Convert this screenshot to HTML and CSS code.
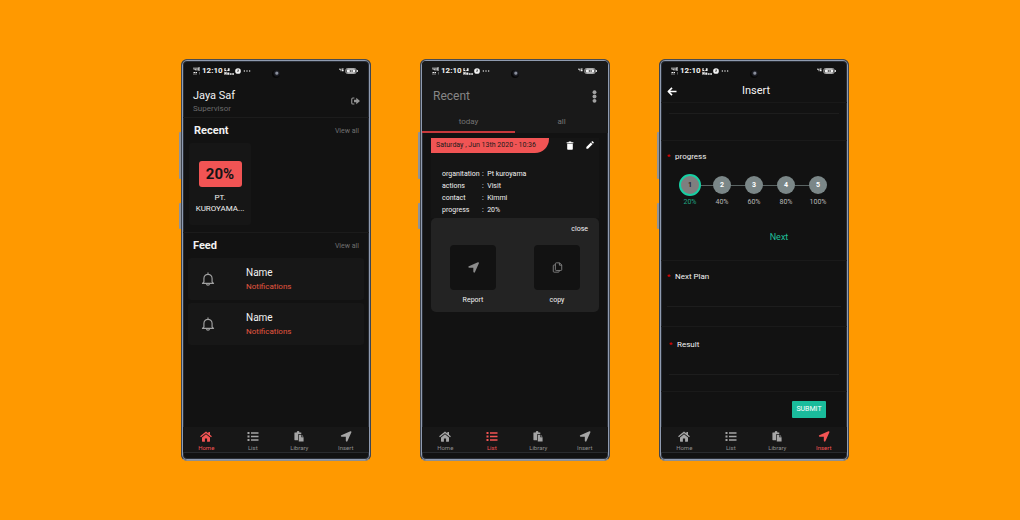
FILE: index.html
```html
<!DOCTYPE html>
<html lang="en">
<head>
<meta charset="utf-8">
<meta name="viewport" content="width=device-width, initial-scale=1">
<title>Sales report app</title>
<link rel="stylesheet" href="styles.css">
</head>
<body>
<svg class="sprite" aria-hidden="true">
  <symbol id="home" viewBox="0 0 24 22"><path d="M12 6.500 4 13v7.500c0 .600.400 1 1 1h4.800V15h4.400v6.500H19c.600 0 1-.400 1-1V13z"/><path d="M23.800 10.500 20 7.400V2h-3.300v2.700L13.300 1.800a2 2 0 0 0-2.600 0L.200 10.500l1.700 2.200L12 4.400l10.100 8.300z"/></symbol>
  <symbol id="list" viewBox="0 0 24 22"><path d="M1 2h4v4H1zM1 9h4v4H1zM1 16h4v4H1zM8 2.500h15v3H8zM8 9.500h15v3H8zM8 16.500h15v3H8z"/></symbol>
  <symbol id="library" viewBox="0 0 24 24"><path d="M3 3h4a3 3 0 0 1 6 0h4v4h-7v13H3a1 1 0 0 1-1-1V4a1 1 0 0 1 1-1zM11.500 8.500H17v5h5V23H11.500z"/><path d="M18.300 8.500 22 12.200h-3.700z"/></symbol>
  <symbol id="arrow" viewBox="0 0 24 24"><path d="M23.800 2.500 15 22.300c-.800 1.700-3.400 1-3.400-.800v-8.900H2.500c-1.900 0-2.400-2.600-.700-3.400L21.600.400c1.400-.500 2.700.700 2.200 2.100z"/></symbol>
  <symbol id="bell" viewBox="0 0 24 24"><path class="line" d="M12 1v2.500M5 17V11a7 7 0 0 1 14 0v6l2.500 2.500h-19zM9.500 20a2.500 2.500 0 0 0 5 0"/></symbol>
  <symbol id="exit" viewBox="0 0 24 20"><path class="line thick" d="M9 2H5a3 3 0 0 0-3 3v10a3 3 0 0 0 3 3h4"/><path d="M8 6.500h6V1.500L24 10l-10 8.500v-5H8z"/></symbol>
  <symbol id="dots" viewBox="0 0 8 24"><circle cx="4" cy="4" r="3.600"/><circle cx="4" cy="12" r="3.600"/><circle cx="4" cy="20" r="3.600"/></symbol>
  <symbol id="trash" viewBox="0 0 20 24"><path d="M1 3h5l1-2h6l1 2h5v3H1zM2.500 7.500h15V21a2 2 0 0 1-2 2h-11a2 2 0 0 1-2-2z"/></symbol>
  <symbol id="pencil" viewBox="0 0 24 24"><path d="M1 18 14.500 4.500l5 5L6 23H1zM16 3l2-2q1-1 2 0l3 3q1 1 0 2l-2 2z"/></symbol>
  <symbol id="copy" viewBox="0 0 24 26"><path class="line" d="M9 2h8l5 5v11a2 2 0 0 1-2 2H9a2 2 0 0 1-2-2V4a2 2 0 0 1 2-2zM16.500 2v5.500H22M7 7H4a2 2 0 0 0-2 2v13a2 2 0 0 0 2 2h10a2 2 0 0 0 2-2v-2"/></symbol>
  <symbol id="back" viewBox="0 0 24 22"><path class="line heavy" d="M12 2 3 11l9 9M3 11h20"/></symbol>
  <symbol id="signal" viewBox="0 0 16 16"><path d="M1 1h2v3h2V1h2v6H5V5H1zM9 1h5v2h-3v2h3v2H9zM1 10h3v2H1zM5 10h3v2H5zM1 13h2v2H1zM5 13h2v2H5z"/><path opacity=".3" d="M12 10h2v5h-2z"/></symbol>
  <symbol id="rate" viewBox="0 0 34 24"><path d="M1 1h5v4H4v2h3v3H1zM9 7h3v3H9zM13 1h6v9h-6zM1 13h3l2 4v-4h3v10H6l-2-4v4H1zM11 15h7v8h-7zM20 18h6v5h-6zM28 18h6v5h-6z"/></symbol>
  <symbol id="clock" viewBox="0 0 20 20"><circle cx="10" cy="10" r="9.500"/><path class="dark" d="M9 11V5h3v6zM7 10h5v2H7z"/></symbol>
  <symbol id="more" viewBox="0 0 22 6"><circle cx="3" cy="3" r="2"/><circle cx="11" cy="3" r="2"/><circle cx="19" cy="3" r="2"/></symbol>
  <symbol id="network" viewBox="0 0 16 20"><path d="M1 2h2v3h2V2h2v9H5V7H1zM9 2h6v3h-4v2h4v4H9z"/></symbol>
  <symbol id="battery" viewBox="0 0 38 18"><rect class="line" x="2" y="1.500" width="31" height="15" rx="5"/><path d="M35 6h3v6h-3z"/><rect x="5" y="4" width="25" height="10" rx="3"/><path class="dark" d="M14 6h2v2h4V6h2v6h-2v-2h-4v2h-2z"/></symbol>
</svg>

<main class="stage">

  <section class="phone" aria-label="Home screen">
    <div class="status">
      <svg class="s-signal"><use href="#signal"/></svg><span class="time">12:10</span><svg class="s-rate"><use href="#rate"/></svg><svg class="s-clock"><use href="#clock"/></svg><svg class="s-more"><use href="#more"/></svg>
      <span class="camera"></span>
      <svg class="s-network"><use href="#network"/></svg><svg class="s-battery"><use href="#battery"/></svg>
    </div>
    <header class="profile">
      <div>
        <h1 class="user">Jaya Saf</h1>
        <p class="role">Supervisor</p>
      </div>
      <button class="icon-button" aria-label="Log out"><svg class="i-exit"><use href="#exit"/></svg></button>
    </header>
    <section class="recent">
      <div class="section-head"><h2 class="section-title">Recent</h2><a class="view-all" href="#recent">View all</a></div>
      <article class="visit">
        <strong class="percent">20%</strong>
        <p class="company">PT.<br>KUROYAMA...</p>
      </article>
    </section>
    <section class="feed">
      <div class="section-head"><h2 class="section-title">Feed</h2><a class="view-all" href="#feed">View all</a></div>
      <article class="notice"><svg class="i-bell"><use href="#bell"/></svg><div><h3 class="notice-name">Name</h3><p class="notice-text">Notifications</p></div></article>
      <article class="notice"><svg class="i-bell"><use href="#bell"/></svg><div><h3 class="notice-name">Name</h3><p class="notice-text">Notifications</p></div></article>
    </section>
    <nav class="tabbar">
      <a class="tab active" href="#home-tab"><svg class="i-tab"><use href="#home"/></svg>Home</a>
      <a class="tab" href="#list-tab"><svg class="i-tab"><use href="#list"/></svg>List</a>
      <a class="tab" href="#library-tab"><svg class="i-tab"><use href="#library"/></svg>Library</a>
      <a class="tab" href="#insert-tab"><svg class="i-tab"><use href="#arrow"/></svg>Insert</a>
    </nav>
  </section>

  <section class="phone" aria-label="List screen">
    <div class="status raised">
      <svg class="s-signal"><use href="#signal"/></svg><span class="time">12:10</span><svg class="s-rate"><use href="#rate"/></svg><svg class="s-clock"><use href="#clock"/></svg><svg class="s-more"><use href="#more"/></svg>
      <span class="camera"></span>
      <svg class="s-network"><use href="#network"/></svg><svg class="s-battery"><use href="#battery"/></svg>
    </div>
    <header class="list-head raised">
      <h1 class="list-title">Recent</h1>
      <button class="icon-button" aria-label="More options"><svg class="i-dots"><use href="#dots"/></svg></button>
    </header>
    <div class="filters raised">
      <button class="filter selected">today</button>
      <button class="filter">all</button>
    </div>
    <article class="entry">
      <div class="entry-head">
        <h2 class="entry-date">Saturday , Jun 13th 2020 - 10:36</h2>
        <div class="entry-tools">
          <button class="icon-button" aria-label="Delete"><svg class="i-trash"><use href="#trash"/></svg></button>
          <button class="icon-button" aria-label="Edit"><svg class="i-pencil"><use href="#pencil"/></svg></button>
        </div>
      </div>
      <dl class="details">
        <dt>organitation</dt><dd>:&nbsp; Pt kuroyama</dd>
        <dt>actions</dt><dd>:&nbsp; Visit</dd>
        <dt>contact</dt><dd>:&nbsp; Kimmi</dd>
        <dt>progress</dt><dd>:&nbsp; 20%</dd>
      </dl>
    </article>
    <div class="sheet">
      <button class="close">close</button>
      <div class="choices">
        <button class="choice"><span class="tile"><svg class="i-tile"><use href="#arrow"/></svg></span>Report</button>
        <button class="choice"><span class="tile"><svg class="i-tile"><use href="#copy"/></svg></span>copy</button>
      </div>
    </div>
    <nav class="tabbar">
      <a class="tab" href="#home-tab"><svg class="i-tab"><use href="#home"/></svg>Home</a>
      <a class="tab active" href="#list-tab"><svg class="i-tab"><use href="#list"/></svg>List</a>
      <a class="tab" href="#library-tab"><svg class="i-tab"><use href="#library"/></svg>Library</a>
      <a class="tab" href="#insert-tab"><svg class="i-tab"><use href="#arrow"/></svg>Insert</a>
    </nav>
  </section>

  <section class="phone" aria-label="Insert screen">
    <div class="status">
      <svg class="s-signal"><use href="#signal"/></svg><span class="time">12:10</span><svg class="s-rate"><use href="#rate"/></svg><svg class="s-clock"><use href="#clock"/></svg><svg class="s-more"><use href="#more"/></svg>
      <span class="camera"></span>
      <svg class="s-network"><use href="#network"/></svg><svg class="s-battery"><use href="#battery"/></svg>
    </div>
    <header class="insert-head">
      <button class="icon-button" aria-label="Back"><svg class="i-back"><use href="#back"/></svg></button>
      <h1 class="insert-title">Insert</h1>
    </header>
    <form class="form">
      <div class="field scrolled"><input class="entry-line" type="text" aria-label="Previous field"></div>
      <div class="field progress">
        <h2 class="label"><span class="required">*</span>progress</h2>
        <ol class="steps">
          <li class="step current"><span class="dot">1</span>20%</li>
          <li class="step"><span class="dot">2</span>40%</li>
          <li class="step"><span class="dot">3</span>60%</li>
          <li class="step"><span class="dot">4</span>80%</li>
          <li class="step"><span class="dot">5</span>100%</li>
        </ol>
        <button class="next" type="button">Next</button>
      </div>
      <div class="field">
        <label class="label" for="plan"><span class="required">*</span>Next Plan</label>
        <input class="entry-line" id="plan" type="text">
      </div>
      <div class="field inset">
        <label class="label" for="result"><span class="required">*</span>Result</label>
        <input class="entry-line" id="result" type="text">
      </div>
      <button class="submit" type="submit">SUBMIT</button>
    </form>
    <nav class="tabbar">
      <a class="tab" href="#home-tab"><svg class="i-tab"><use href="#home"/></svg>Home</a>
      <a class="tab" href="#list-tab"><svg class="i-tab"><use href="#list"/></svg>List</a>
      <a class="tab" href="#library-tab"><svg class="i-tab"><use href="#library"/></svg>Library</a>
      <a class="tab active" href="#insert-tab"><svg class="i-tab"><use href="#arrow"/></svg>Insert</a>
    </nav>
  </section>

</main>
</body>
</html>
```

FILE: styles.css
```css
* { box-sizing: border-box; }

body {
  margin: 0;
  min-height: 100vh;
  background: #ff9900;
  color: #f2f2f2;
  font-family: Roboto, "Liberation Sans", sans-serif;
  font-size: 8px;
  line-height: 12px;
}

h1, h2, h3, p, dl, dd, ol { margin: 0; padding: 0; font-size: inherit; font-weight: 400; }
button, input { font: inherit; color: inherit; background: none; border: 0; margin: 0; padding: 0; }
a { color: inherit; text-decoration: none; }
svg { display: block; flex: none; fill: currentColor; }
.sprite { position: absolute; width: 0; height: 0; }
.line { fill: none; stroke: currentColor; stroke-width: 2; stroke-linejoin: round; }
.thick { stroke-width: 3; }
.heavy { stroke-width: 4; }
.dark { fill: #121212; }

.stage {
  display: grid;
  grid-template-columns: repeat(auto-fit, 190px);
  justify-content: center;
  gap: 49px;
  padding: 59px 140px 59px 150px;
}

/* Phone body */
.phone {
  position: relative;
  display: flex;
  flex-direction: column;
  min-height: 402px;
  padding: 1px;
  background: #121212;
  border: 1px solid;
  border-color: #4a4c50 #3f4550 #8d8f93;
  border-radius: 6px;
  box-shadow: inset 0 0 0 1px #8f9bb0, inset 0 0 0 2px #2a2e36;
}
.phone::before,
.phone::after {
  content: "";
  position: absolute;
  left: -3px;
  width: 2px;
  background: #8f949c;
  border-radius: 1px 0 0 1px;
}
.phone::before { top: 72px; height: 47px; }
.phone::after { top: 143px; height: 26px; }
.raised { background: #191919; }

.status {
  position: relative;
  display: flex;
  align-items: center;
  gap: 1px;
  height: 19px;
  padding: 1px 11px 0 10px;
  border-radius: 4px 4px 0 0;
}
.time { font-size: 8px; font-weight: 700; }
.s-signal { width: 8px; height: 8px; }
.s-rate { width: 10px; height: 7px; }
.s-clock { width: 6px; height: 6px; margin-right: 1px; }
.s-more { width: 8px; height: 2px; }
.s-network { width: 5px; height: 6px; margin-left: auto; }
.s-battery { width: 13px; height: 6px; }
.camera {
  position: absolute;
  left: 50%;
  top: 9px;
  width: 8px;
  height: 8px;
  margin-left: -4px;
  border-radius: 50%;
  background: radial-gradient(circle at 60% 40%, #8a8f9c 0 1px, #20222a 2px, #060606 4px);
}

.icon-button { display: flex; }

/* Home */
.profile {
  display: flex;
  align-items: center;
  justify-content: space-between;
  padding: 9px 9px 2px 10px;
  border-bottom: 1px solid #1c1c1c;
}
.user { font-size: 11px; line-height: 14px; }
.role { color: #6b6b6b; line-height: 12px; }
.i-exit { width: 9px; height: 8px; color: #969696; }
.profile .icon-button { padding-bottom: 2px; }
.section-head {
  display: flex;
  align-items: center;
  justify-content: space-between;
  padding: 6px 5px 5px;
}
.section-title { font-size: 11px; line-height: 14px; font-weight: 700; }
.view-all { color: #707070; font-size: 7px; }
.recent { padding: 0 5px 7px 6px; border-bottom: 1px solid #1b1b1b; }
.visit {
  display: flex;
  flex-direction: column;
  align-items: center;
  width: 62px;
  padding: 18px 4px 11px;
  background: #161616;
  border-radius: 3px;
}
.percent {
  width: 43px;
  border-radius: 3px;
  background: #f15454;
  color: #141414;
  font-size: 15px;
  line-height: 26px;
  text-align: center;
}
.company { margin-top: 5px; line-height: 11px; text-align: center; white-space: nowrap; }
.feed { padding: 0 5px; }
.notice {
  display: grid;
  grid-template-columns: 58px 1fr;
  align-items: center;
  min-height: 42px;
  margin-bottom: 3px;
  background: #171717;
  border-radius: 3px;
}
.i-bell { width: 14px; height: 14px; margin-left: 13px; color: #a0a0a0; }
.notice-name { font-size: 10px; line-height: 14px; }
.notice-text { line-height: 13px; color: #e3563f; }

/* List */
.list-head {
  display: flex;
  align-items: center;
  justify-content: space-between;
  height: 32px;
  padding: 0 11px;
}
.list-title { font-size: 12px; line-height: 16px; color: #868686; }
.i-dots { width: 5px; height: 13px; color: #a2a2a2; }
.filters { display: flex; color: #747474; }
.filter { flex: 1; height: 21px; border-bottom: 2px solid transparent; }
.selected { border-color: #c7393c; }
.entry { margin: 5px 9px 0; padding-bottom: 2px; background: #151515; }
.entry-head { display: flex; align-items: center; justify-content: space-between; }
.entry-date {
  padding: 0 13px 0 5px;
  background: #f15454;
  color: #1b1b1b;
  border-bottom-right-radius: 14px;
  font-size: 7px;
  line-height: 15px;
}
.entry-tools { display: flex; gap: 12px; padding-right: 5px; }
.i-trash { width: 8px; height: 9px; color: #fff; }
.i-pencil { width: 8px; height: 8px; color: #fff; }
.details {
  display: grid;
  grid-template-columns: 40px 1fr;
  padding: 15px 0 0 11px;
  font-size: 7px;
  line-height: 12px;
}
.sheet {
  display: flex;
  flex-direction: column;
  margin: 0 9px;
  padding: 5px 11px 6px;
  background: #232323;
  border-radius: 5px;
  font-size: 7px;
}
.close { align-self: flex-end; line-height: 12px; }
.choices { display: flex; justify-content: space-around; padding-top: 10px; margin: 0 -11px; }
.choice { display: flex; flex-direction: column; align-items: center; gap: 4px; line-height: 12px; }
.tile {
  display: grid;
  place-items: center;
  width: 46px;
  height: 45px;
  background: #121212;
  border-radius: 4px;
  color: #8c8c8c;
}
.i-tile { width: 11px; height: 11px; }

/* Insert */
.insert-head {
  display: grid;
  grid-template-columns: 12px 1fr 8px;
  align-items: center;
  height: 23px;
  padding: 0 6px;
  border-bottom: 1px solid #191919;
}
.i-back { width: 10px; height: 9px; color: #fff; }
.insert-title { font-size: 11px; text-align: center; }
.form { display: flex; flex-direction: column; }
.field { display: flex; flex-direction: column; padding: 10px 6px 19px; border-bottom: 1px solid #1a1a1a; }
.inset { padding: 12px 8px 16px; }
.entry-line { width: 100%; height: 18px; border-bottom: 1px solid #1d1d1d; outline: 0; }
.label { display: flex; gap: 5px; line-height: 12px; margin-bottom: 6px; }
.required { color: #f00000; width: 3px; }
.scrolled { padding: 0 8px 26px; }
.scrolled .entry-line { height: 11px; }
.progress { padding: 10px 6px 16px; }
.steps {
  display: grid;
  grid-template-columns: repeat(5, 32px);
  margin: 5px 0 0 7px;
  list-style: none;
  font-size: 7px;
  line-height: 12px;
  color: #b8b8b8;
}
.step {
  display: flex;
  flex-direction: column;
  align-items: center;
  background: linear-gradient(#5a6463, #5a6463) 0 11px / 100% 1px no-repeat;
}
.step:first-child { background-size: 16px 1px; background-position: 16px 11px; }
.step:last-child { background-size: 16px 1px; }
.dot {
  width: 18px;
  height: 18px;
  margin: 2px 0;
  border-radius: 50%;
  background: #7b8788;
  color: #fff;
  font-weight: 700;
  line-height: 18px;
  text-align: center;
}
.current { color: #1fa583; }
.current .dot {
  width: 22px;
  height: 22px;
  margin: 0;
  border: 2px solid #18cfa3;
  background: #7f7f7f;
  color: #222;
}
.next { align-self: center; margin: 22px 0 0 50px; font-size: 9px; line-height: 14px; color: #1fbf98; }
.submit {
  align-self: flex-end;
  min-width: 34px;
  margin: 9px 21px 0;
  padding: 0 4px;
  border-radius: 1px;
  background: #1abc9c;
  color: #fff;
  font-size: 7px;
  line-height: 17px;
}

/* Bottom navigation */
.tabbar {
  display: grid;
  grid-template-columns: repeat(4, 1fr);
  margin: auto 0 6px;
  padding-top: 4px;
  background: #171717;
  border-bottom: 1px solid #292b2e;
  color: #8f8f8f;
  font-size: 6px;
  line-height: 8px;
}
.tab { display: flex; flex-direction: column; align-items: center; gap: 2px; }
.i-tab { width: 12px; height: 11px; color: #a5a5a5; }
.active, .active .i-tab { color: #f35454; }
```
